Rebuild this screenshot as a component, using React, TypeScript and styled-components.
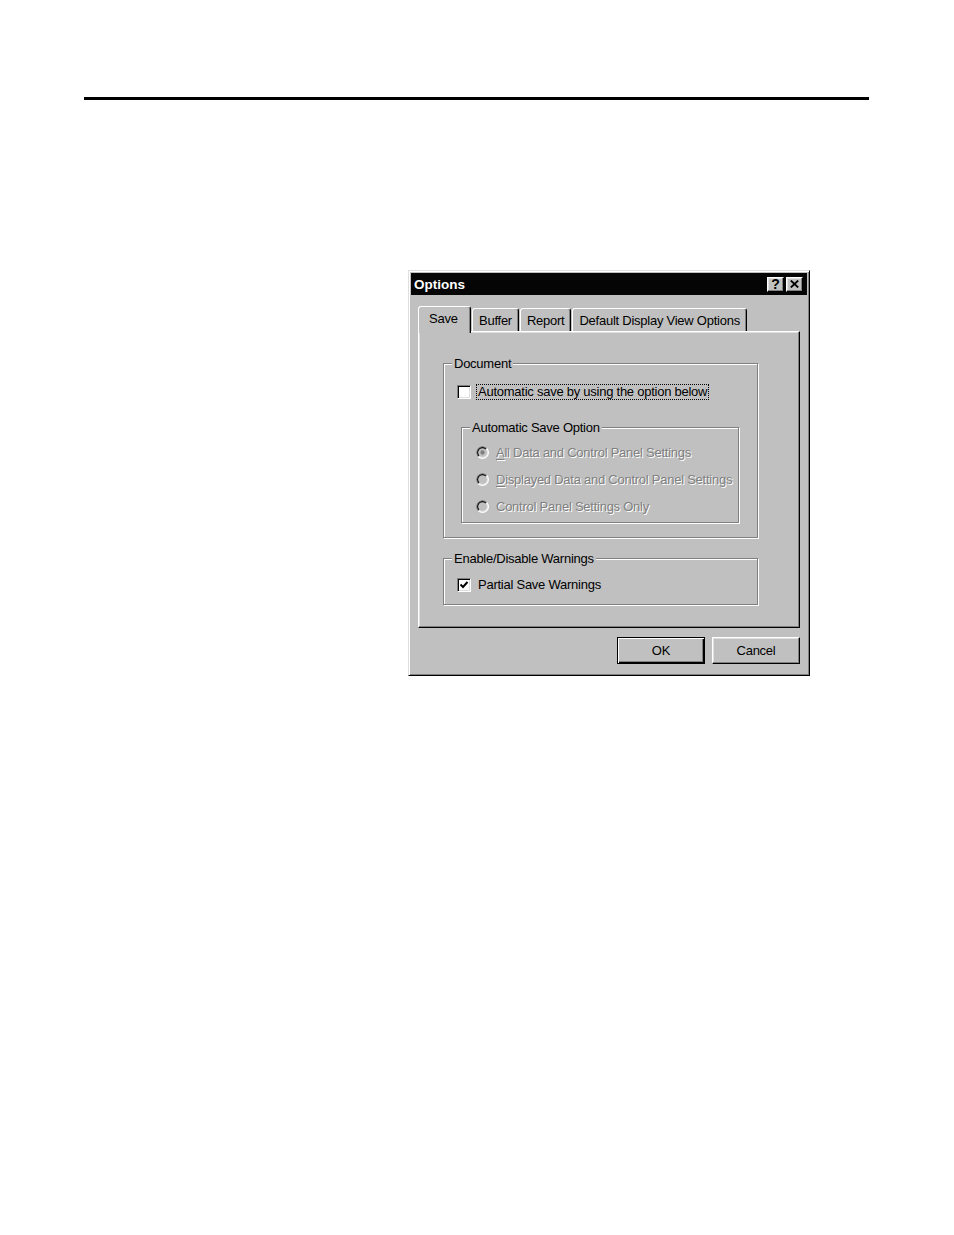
import React from "react";
import styled, { createGlobalStyle } from "styled-components";

const GRAY = "#c0c0c0";
const DARK = "#808080";
const LIGHT = "#dfdfdf";

const GlobalStyle = createGlobalStyle`
  html, body {
    margin: 0;
    padding: 0;
    background: #fff;
  }
  body {
    font-family: "Liberation Sans", Arial, sans-serif;
    font-size: 13px;
    letter-spacing: -0.25px;
    color: #000;
  }
`;

const Page = styled.div`
  min-height: 1235px;
  padding: 97px 85px 0 84px;
  box-sizing: border-box;
`;

const Rule = styled.div`
  height: 3px;
  background: #000;
`;

const DialogRow = styled.div`
  display: flex;
  margin-top: 170px;
  padding-left: 324px;
`;

const Window = styled.div`
  width: 402px;
  height: 406px;
  box-sizing: border-box;
  background: ${GRAY};
  border: 1px solid;
  border-color: ${LIGHT} #000 #000 ${LIGHT};
  box-shadow: inset 1px 1px #fff, inset -1px -1px ${DARK};
  padding: 2px;
  display: flex;
  flex-direction: column;
`;

const TitleBar = styled.div`
  height: 22px;
  background: #050505;
  display: flex;
  align-items: center;
  padding: 0 4px 0 3px;
`;

const Title = styled.span`
  color: #fff;
  font-weight: bold;
  font-size: 13.5px;
  letter-spacing: 0;
`;

const TitleButtons = styled.div`
  margin-left: auto;
  display: flex;
  gap: 2px;
`;

const TitleButton = styled.div`
  width: 17px;
  height: 15px;
  box-sizing: border-box;
  background: ${GRAY};
  border: 1px solid;
  border-color: #fff #000 #000 #fff;
  box-shadow: inset -1px -1px ${DARK}, inset 1px 1px ${LIGHT};
  display: flex;
  align-items: center;
  justify-content: center;
  font-weight: bold;
  font-size: 14px;
  line-height: 1;
  letter-spacing: 0;
`;

const Body = styled.div`
  padding: 11px 7px 0 7px;
  display: flex;
  flex-direction: column;
`;

const TabStrip = styled.div`
  display: flex;
  align-items: flex-end;
  height: 25px;
  position: relative;
  z-index: 1;
`;

const Tab = styled.div<{ $active?: boolean }>`
  box-sizing: border-box;
  height: ${(p) => (p.$active ? 27 : 23)}px;
  margin-bottom: ${(p) => (p.$active ? -2 : 0)}px;
  margin-right: 1px;
  padding: 0 ${(p) => (p.$active ? 10 : 6)}px;
  width: ${(p) => (p.$active ? "53px" : "auto")};
  background: ${GRAY};
  border: 1px solid;
  border-bottom: none;
  border-color: #fff #000 transparent #fff;
  border-radius: 3px 3px 0 0;
  box-shadow: inset -1px 0 ${DARK};
  display: flex;
  align-items: ${(p) => (p.$active ? "flex-start" : "center")};
  padding-top: ${(p) => (p.$active ? 4 : 0)}px;
  white-space: nowrap;
`;

const Panel = styled.div`
  box-sizing: border-box;
  height: 297px;
  border: 1px solid;
  border-color: #fff #000 #000 #fff;
  box-shadow: inset -1px -1px ${DARK}, inset 1px 1px ${LIGHT};
  padding: 31px 0 0 24px;
  display: flex;
  flex-direction: column;
  gap: 20px;
`;

const Group = styled.div<{ $w: number; $h: number; $pt: number; $pl: number }>`
  position: relative;
  box-sizing: border-box;
  width: ${(p) => p.$w}px;
  height: ${(p) => p.$h}px;
  border: 1px solid ${DARK};
  box-shadow: inset 1px 1px #fff, 1px 1px #fff;
  padding: ${(p) => p.$pt}px 0 0 ${(p) => p.$pl}px;
  display: flex;
  flex-direction: column;
`;

const GroupLabel = styled.span`
  position: absolute;
  top: -8px;
  left: 8px;
  padding: 0 2px;
  line-height: 15px;
  background: ${GRAY};
  white-space: nowrap;
`;

const Row = styled.div`
  display: flex;
  align-items: center;
  height: 16px;
  gap: 5px;
`;

const Box = styled.div`
  width: 14px;
  height: 14px;
  box-sizing: border-box;
  background: #fff;
  border: 1px solid;
  border-color: ${DARK} #fff #fff ${DARK};
  box-shadow: inset 1px 1px #000, inset -1px -1px ${LIGHT};
  display: flex;
  align-items: center;
  justify-content: center;
`;

const Label = styled.span<{ $focus?: boolean }>`
  border: 1px dotted ${(p) => (p.$focus ? "#000" : "transparent")};
  padding: 0 1px;
  line-height: 14px;
  white-space: nowrap;
`;

const RadioList = styled.div`
  display: flex;
  flex-direction: column;
  gap: 11px;
`;

const RadioRow = styled.div`
  display: flex;
  align-items: center;
  height: 16px;
  gap: 7px;
`;

const DisabledText = styled.span`
  color: ${DARK};
  text-shadow: 1px 1px 0 #fff;
  white-space: nowrap;
  u {
    text-decoration: underline;
    text-underline-offset: 2px;
  }
`;

const InnerGroupSpacer = styled.div`
  margin-top: 27px;
  margin-left: 4px;
`;

const ButtonRow = styled.div`
  display: flex;
  justify-content: flex-end;
  gap: 7px;
  padding-top: 9px;
`;

const PushButton = styled.div<{ $default?: boolean }>`
  width: 88px;
  height: 27px;
  box-sizing: border-box;
  background: ${GRAY};
  border: 1px solid;
  border-color: ${(p) => (p.$default ? "#000" : "#fff #000 #000 #fff")};
  box-shadow: ${(p) =>
    p.$default
      ? `inset 1px 1px #fff, inset -1px -1px #000, inset -2px -2px ${DARK}`
      : `inset -1px -1px ${DARK}, inset 1px 1px ${LIGHT}`};
  display: flex;
  align-items: center;
  justify-content: center;
`;

const Check = () => (
  <svg width="10" height="10" viewBox="0 0 10 10">
    <path d="M1.5 4.5 L4 7 L8.5 2" fill="none" stroke="#000" strokeWidth="1.9" />
  </svg>
);

const CloseGlyph = () => (
  <svg width="9" height="8" viewBox="0 0 9 8">
    <path d="M0.8 0.5 L8.2 7.5 M8.2 0.5 L0.8 7.5" stroke="#000" strokeWidth="1.8" />
  </svg>
);

const half = (r: number) => {
  const d = r / Math.SQRT2;
  return `M${6 - d} ${6 + d} A${r} ${r} 0 0 1 ${6 + d} ${6 - d} Z`;
};

const Radio = ({ checked }: { checked?: boolean }) => (
  <svg width="13" height="13" viewBox="0 0 12 12">
    <circle cx="6" cy="6" r="6" fill="#fff" />
    <path d={half(6)} fill={DARK} />
    <circle cx="6" cy="6" r="5" fill={LIGHT} />
    <path d={half(5)} fill="#000" />
    <circle cx="6" cy="6" r="4" fill={GRAY} />
    {checked && <circle cx="6" cy="6" r="2" fill={DARK} />}
  </svg>
);

const radios = [
  { key: "A", rest: "ll Data and Control Panel Settings", checked: true, underline: true },
  { key: "D", rest: "isplayed Data and Control Panel Settings", underline: true },
  { key: "C", rest: "ontrol Panel Settings Only" },
];

export default function App() {
  return (
    <>
      <GlobalStyle />
      <Page>
        <Rule />
        <DialogRow>
          <Window>
            <TitleBar>
              <Title>Options</Title>
              <TitleButtons>
                <TitleButton>?</TitleButton>
                <TitleButton>
                  <CloseGlyph />
                </TitleButton>
              </TitleButtons>
            </TitleBar>
            <Body>
              <TabStrip>
                <Tab $active>Save</Tab>
                <Tab>Buffer</Tab>
                <Tab>Report</Tab>
                <Tab>Default Display View Options</Tab>
              </TabStrip>
              <Panel>
                <Group $w={315} $h={175} $pt={20} $pl={13}>
                  <GroupLabel>Document</GroupLabel>
                  <Row>
                    <Box />
                    <Label $focus>Automatic save by using the option below</Label>
                  </Row>
                  <InnerGroupSpacer>
                    <Group $w={278} $h={96} $pt={16} $pl={14}>
                      <GroupLabel>Automatic Save Option</GroupLabel>
                      <RadioList>
                        {radios.map((r) => (
                          <RadioRow key={r.key}>
                            <Radio checked={r.checked} />
                            <DisabledText>
                              {r.underline ? <u>{r.key}</u> : r.key}
                              {r.rest}
                            </DisabledText>
                          </RadioRow>
                        ))}
                      </RadioList>
                    </Group>
                  </InnerGroupSpacer>
                </Group>
                <Group $w={315} $h={47} $pt={18} $pl={13}>
                  <GroupLabel>Enable/Disable Warnings</GroupLabel>
                  <Row>
                    <Box>
                      <Check />
                    </Box>
                    <Label>Partial Save Warnings</Label>
                  </Row>
                </Group>
              </Panel>
              <ButtonRow>
                <PushButton $default>OK</PushButton>
                <PushButton>Cancel</PushButton>
              </ButtonRow>
            </Body>
          </Window>
        </DialogRow>
      </Page>
    </>
  );
}
